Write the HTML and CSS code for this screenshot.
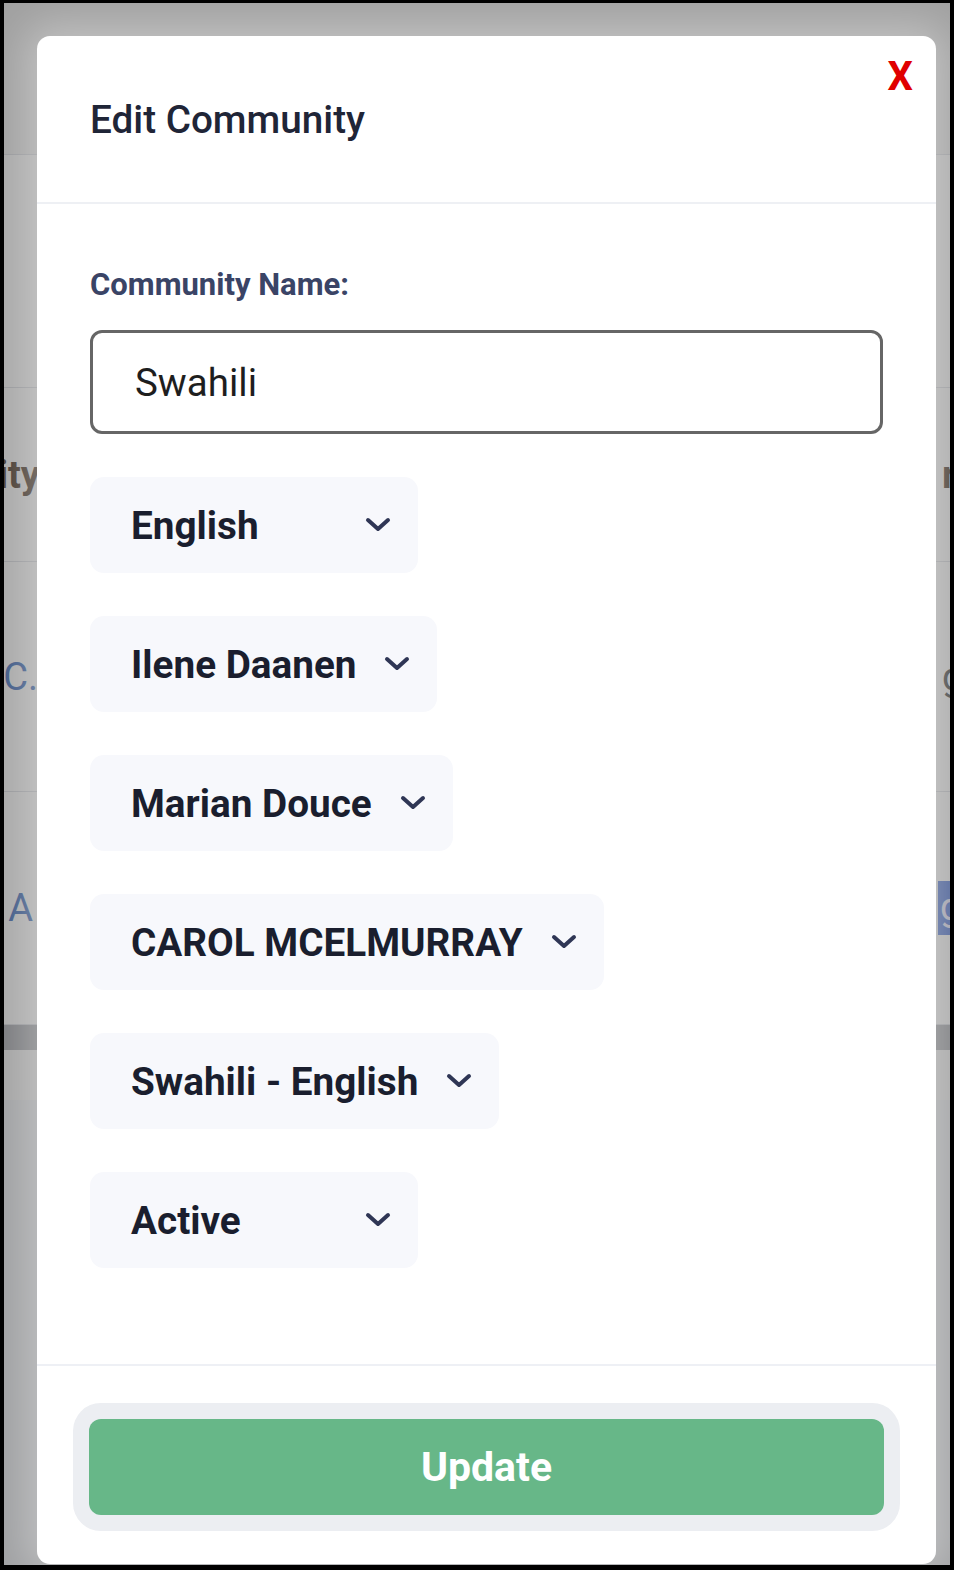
FILE: index.html
```html
<!DOCTYPE html>
<html lang="en">
<head>
<meta charset="utf-8">
<title>Edit Community</title>
<link rel="stylesheet" href="styles.css">
</head>
<body>
<div class="frame">
  <div class="bg-page">
    <div class="bg-row bg-top"></div>
    <div class="bg-row bg-r1"></div>
    <div class="bg-row bg-r2">
      <div class="bg-left"><span class="bg-head">Community</span></div>
      <div class="bg-right"><span class="bg-head">r</span></div>
    </div>
    <div class="bg-row bg-r3">
      <div class="bg-left"><span class="bg-link">ARC.</span></div>
      <div class="bg-right"><span class="bg-plain">g</span></div>
    </div>
    <div class="bg-row bg-r4">
      <div class="bg-left"><span class="bg-link">A</span></div>
      <div class="bg-right"><span class="bg-chip">g</span></div>
    </div>
    <div class="bg-row bg-band"></div>
    <div class="bg-row bg-band2"></div>
    <div class="bg-row bg-rest"></div>
  </div>
  <div class="overlay"></div>

  <div class="modal">
    <div class="modal-header">
      <h2 class="modal-title">Edit Community</h2>
      <span class="close">X</span>
    </div>
    <div class="modal-body">
      <label class="field-label">Community Name:</label>
      <div class="text-input">Swahili</div>
      <div class="selects">
        <div class="select select-min"><span>English</span><svg class="chev" viewBox="0 0 26 16"><path d="M3 3 L13 12 L23 3"/></svg></div>
        <div class="select"><span>Ilene Daanen</span><svg class="chev" viewBox="0 0 26 16"><path d="M3 3 L13 12 L23 3"/></svg></div>
        <div class="select"><span>Marian Douce</span><svg class="chev" viewBox="0 0 26 16"><path d="M3 3 L13 12 L23 3"/></svg></div>
        <div class="select"><span>CAROL MCELMURRAY</span><svg class="chev" viewBox="0 0 26 16"><path d="M3 3 L13 12 L23 3"/></svg></div>
        <div class="select"><span>Swahili - English</span><svg class="chev" viewBox="0 0 26 16"><path d="M3 3 L13 12 L23 3"/></svg></div>
        <div class="select select-min"><span>Active</span><svg class="chev" viewBox="0 0 26 16"><path d="M3 3 L13 12 L23 3"/></svg></div>
      </div>
    </div>
    <div class="modal-footer">
      <button class="btn-update">Update</button>
    </div>
  </div>
</div>
</body>
</html>
```
FILE: styles.css
```css
* { box-sizing: border-box; }
html, body { margin: 0; padding: 0; }
body {
  background: #000;
  font-family: Roboto, "Liberation Sans", Arial, sans-serif;
}
.frame {
  position: relative;
  margin: 3px 4px 0 4px;
  width: 946px;
  height: 1562px;
  overflow: hidden;
  background: #fff;
}

/* background page behind the overlay */
.bg-page {
  display: flex;
  flex-direction: column;
  height: 100%;
}
.bg-row {
  display: flex;
  justify-content: space-between;
  align-items: center;
  border-bottom: 1px solid #e2e4e8;
  background: #fff;
  flex: none;
}
.bg-top { height: 152px; background: #f4f4f4; }
.bg-r1 { height: 233px; }
.bg-r2 { height: 174px; }
.bg-r3 { height: 230px; }
.bg-r4 { height: 233px; }
.bg-band { height: 25px; background: #b9bbc0; border-bottom: none; }
.bg-band2 { height: 50px; background: #f8f8f8; border-bottom: none; }
.bg-rest { flex: 1; background: #f2f3f6; border-bottom: none; }
.bg-left {
  width: 37px;
  display: flex;
  justify-content: flex-end;
  overflow: hidden;
  white-space: nowrap;
}
.bg-right {
  width: 40px;
  padding-left: 32px;
  display: flex;
  justify-content: flex-start;
  overflow: hidden;
  white-space: nowrap;
}
.bg-head { font-size: 38px; font-weight: 700; color: #6b5a4c; }
.bg-link { font-size: 38px; color: #5e86c9; }
.bg-plain { font-size: 38px; color: #666; }
.bg-chip {
  font-size: 38px; color: #eef; background: #6f8fe0;
  padding: 4px 12px 6px 2px;
}
.bg-r2 .bg-left { padding-right: 1px; }
.bg-r3 .bg-left { padding-right: 3px; }
.bg-r4 .bg-left { padding-right: 8px; }
.bg-r4 .bg-right { padding-left: 28px; }
.overlay {
  position: absolute;
  inset: 0;
  background: rgba(0, 0, 0, 0.34);
}

/* modal */
.modal {
  position: absolute;
  left: 33px;
  top: 33px;
  width: 899px;
  height: 1528px;
  background: #fff;
  border-radius: 13px;
  box-shadow: 0 0 40px 12px rgba(255, 255, 255, 0.35);
  display: flex;
  flex-direction: column;
}
.modal-header {
  position: relative;
  height: 168px;
  padding: 61px 53px 0;
  border-bottom: 2px solid #eef0f4;
}
.modal-title {
  margin: 0;
  font-size: 38.7px;
  line-height: 46px;
  font-weight: 500;
  color: #1f2537;
}
.close {
  position: absolute;
  top: 21px;
  right: 23px;
  font-size: 40px;
  line-height: 40px;
  font-weight: 700;
  color: #e00000;
}
.modal-body {
  display: flex;
  flex-direction: column;
  align-items: flex-start;
  padding: 63px 53px 96px;
}
.field-label {
  font-size: 31px;
  line-height: 35px;
  font-weight: 700;
  color: #3a4466;
}
.text-input {
  margin-top: 28px;
  width: 100%;
  height: 104px;
  border: 3px solid #666;
  border-radius: 12px;
  padding-left: 42px;
  display: flex;
  align-items: center;
  font-size: 38.5px;
  color: #1e1e1e;
}
.selects {
  margin-top: 43px;
  display: flex;
  flex-direction: column;
  align-items: flex-start;
  gap: 43px;
}
.select {
  height: 96px;
  background: #f7f8fc;
  border-radius: 14px;
  padding: 0 27px 0 41px;
  display: flex;
  align-items: center;
  justify-content: space-between;
  gap: 28px;
  font-size: 38.7px;
  font-weight: 700;
  color: #1a1e2e;
}
.select-min { min-width: 328px; }
.chev {
  width: 26px;
  height: 16px;
  flex: none;
}
.chev path {
  fill: none;
  stroke: #2f3655;
  stroke-width: 4;
  stroke-linecap: round;
  stroke-linejoin: round;
}
.modal-footer {
  flex: 1;
  border-top: 2px solid #eef0f5;
  padding: 53px 52px 0;
}
.btn-update {
  display: block;
  width: 100%;
  height: 96px;
  border: none;
  border-radius: 12px;
  background: #67b788;
  box-shadow: 0 0 0 16px #eceef2;
  font-family: Roboto, "Liberation Sans", Arial, sans-serif;
  font-size: 41px;
  font-weight: 700;
  color: #fff;
}
```
